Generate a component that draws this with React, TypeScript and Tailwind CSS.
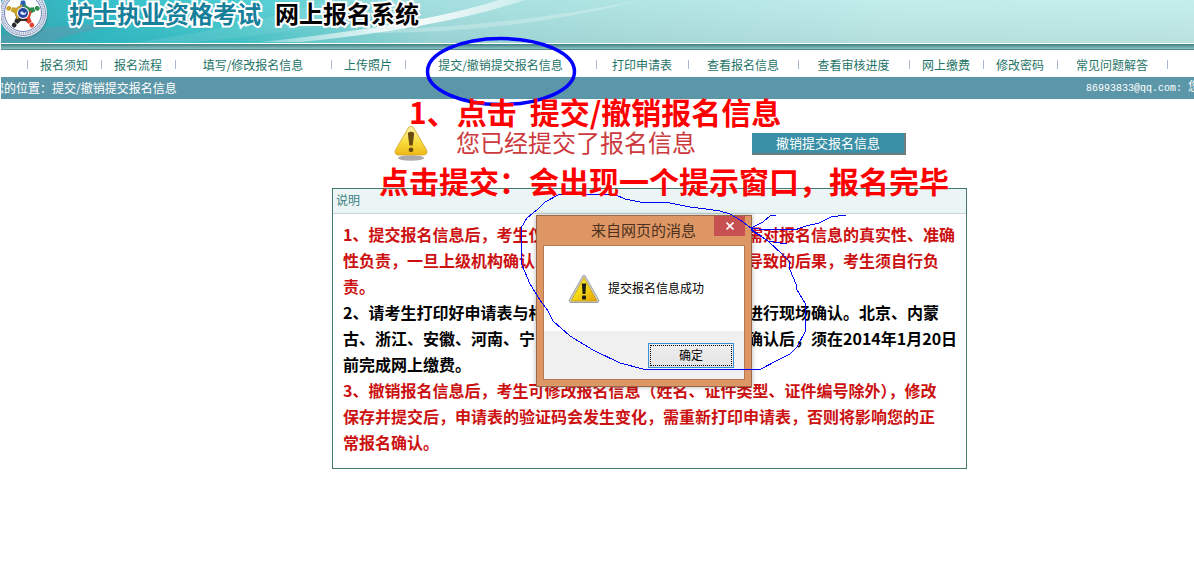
import clsx from "clsx";

const navItems = [
  { label: "报名须知", width: "w-[74px]" },
  { label: "报名流程", width: "w-[74px]" },
  { label: "填写/修改报名信息", width: "w-[156px]" },
  { label: "上传照片", width: "w-[74px]" },
  { label: "提交/撤销提交报名信息", width: "w-[191px]" },
  { label: "打印申请表", width: "w-[92px]" },
  { label: "查看报名信息", width: "w-[110px]" },
  { label: "查看审核进度", width: "w-[111px]" },
  { label: "网上缴费", width: "w-[74px]" },
  { label: "修改密码", width: "w-[74px]" },
  { label: "常见问题解答", width: "w-[110px]" },
];

type Notice = { tone: string; lines: string[][] };

// a line with two parts runs on either side of the message window
const notices: Notice[] = [
  {
    tone: "text-[#cc1111]",
    lines: [
      ["1、提交报名信息后，考生仅", "需对报名信息的真实性、准确"],
      ["性负责，一旦上级机构确认", "导致的后果，考生须自行负"],
      ["责。"],
    ],
  },
  {
    tone: "text-black",
    lines: [
      ["2、请考生打印好申请表与相", "进行现场确认。北京、内蒙"],
      ["古、浙江、安徽、河南、宁", "确认后，须在2014年1月20日"],
      ["前完成网上缴费。"],
    ],
  },
  {
    tone: "text-[#cc1111]",
    lines: [
      ["3、撤销报名信息后，考生可修改报名信息（姓名、证件类型、证件编号除外），修改"],
      ["保存并提交后，申请表的验证码会发生变化，需重新打印申请表，否则将影响您的正"],
      ["常报名确认。"],
    ],
  },
];

const figures = [
  { angle: 0, color: "#2a5fb4" },
  { angle: 72, color: "#2f8f4e" },
  { angle: 144, color: "#e0432e" },
  { angle: 216, color: "#2b2b2b" },
  { angle: 288, color: "#c9a227" },
];

function Logo() {
  return (
    <svg viewBox="0 0 48 40" className="h-10 w-12 shrink-0" aria-hidden="true">
      <circle cx="23" cy="15" r="24" fill="#3f7f92" opacity="0.5" />
      <circle cx="22" cy="13" r="24" fill="#eef1f6" />
      <circle cx="22" cy="13" r="22.5" fill="none" stroke="#6d7fae" strokeWidth="0.8" />
      <circle cx="22" cy="13" r="20.500" fill="none" stroke="#9aa6c8" strokeWidth="2" strokeDasharray="1.2 1" />
      <circle cx="22" cy="13" r="18.500" fill="#fff" stroke="#4c64a4" strokeWidth="0.8" />
      {figures.map(({ angle, color }) => (
        <g key={angle} transform={`rotate(${angle} 22 13)`} fill={color}>
          <circle cx="22" cy="-2" r="2.400" />
          <path d="M20 .8h4l1 4.700 5 3.500-1.200 1.600L24 8h-4l-4.800 2.600L14 9l5-3.500z" />
        </g>
      ))}
      <circle cx="22" cy="13" r="6" fill="#fff" />
      <circle cx="22" cy="13" r="5" fill="#24469c" />
      <path d="M19 13q1.500-3 3-1t3.500-.5q-.5 3.500-3 3.500t-3.500-2z" fill="#dbe6f6" />
    </svg>
  );
}

function BannerArt() {
  return (
    <svg
      viewBox="0 0 1193 43"
      preserveAspectRatio="none"
      className="absolute inset-0 h-full w-full"
      aria-hidden="true"
    >
      <defs>
        <linearGradient id="sky" x1="0" x2="1" y1="0" y2="0">
          <stop offset="0" stopColor="#139aa6" />
          <stop offset="0.08" stopColor="#10b2c0" />
          <stop offset="0.2" stopColor="#2ac2c8" />
          <stop offset="0.28" stopColor="#66cfd2" />
          <stop offset="0.36" stopColor="#9bdadb" />
          <stop offset="0.5" stopColor="#a9e0df" />
          <stop offset="0.75" stopColor="#c0ebe9" />
          <stop offset="1" stopColor="#c4edeb" />
        </linearGradient>
        <linearGradient id="shade" x1="0" x2="0" y1="0" y2="1">
          <stop offset="0" stopColor="#c8f4f2" stopOpacity="0.2" />
          <stop offset="1" stopColor="#90b8b8" stopOpacity="0.25" />
        </linearGradient>
        <linearGradient id="streak" x1="0" x2="1" y1="0" y2="0">
          <stop offset="0" stopColor="#fff" stopOpacity="0.3" />
          <stop offset="0.6" stopColor="#fff" stopOpacity="0.9" />
          <stop offset="1" stopColor="#fff" stopOpacity="0.4" />
        </linearGradient>
      </defs>
      <rect width="1193" height="43" fill="url(#sky)" />
      <path d="M0 43V36Q60 22 130 24Q70 32 48 43z" fill="#4a8fa8" opacity="0.6" />
      <path d="M130 43Q240 28 330 0H420Q340 30 180 43z" fill="#fff" opacity="0.1" />
      <rect width="1193" height="43" fill="url(#shade)" />
      <path d="M260 42Q420 25 498 0H524Q440 28 300 42z" fill="url(#streak)" />
      <path d="M360 30Q500 28 640 0Q520 32 380 33z" fill="#fff" opacity="0.25" />
    </svg>
  );
}

function GlossyWarning() {
  return (
    <svg viewBox="0 0 34 36" className="h-9 w-[34px] shrink-0" aria-hidden="true">
      <defs>
        <linearGradient id="gold" x1="0" x2="0" y1="0" y2="1">
          <stop offset="0" stopColor="#fbf3b0" />
          <stop offset="0.55" stopColor="#f8dc3c" />
          <stop offset="1" stopColor="#f0b818" />
        </linearGradient>
      </defs>
      <ellipse cx="17" cy="32" rx="13" ry="2.800" fill="#8f8f8f" opacity="0.75" />
      <path
        d="M14.500 1.500Q17-1 19.500 1.500L32.500 24Q34 28.500 30 29H4Q0 28.500 1.500 24z"
        fill="url(#gold)"
        stroke="#d3a32a"
        strokeWidth="0.8"
      />
      <path d="M13.800 7Q17 4.500 20.200 7L18.700 19.500h-3.400z" fill="#6b4a12" />
      <circle cx="17" cy="23.800" r="2.400" fill="#6b4a12" />
    </svg>
  );
}

function SystemWarning() {
  return (
    <svg viewBox="0 0 32 30" className="h-[30px] w-8 shrink-0" aria-hidden="true">
      <defs>
        <linearGradient id="amber" x1="0" x2="1" y1="0" y2="1">
          <stop offset="0" stopColor="#fdf04a" />
          <stop offset="0.5" stopColor="#f5d715" />
          <stop offset="1" stopColor="#e79f00" />
        </linearGradient>
      </defs>
      <path d="M15 1.500h2L31 26.500 30 28.500H2L1 26.500z" fill="#d2d2d2" stroke="#a0a0a0" />
      <path d="M16 3.500L29 27H3z" fill="url(#amber)" stroke="#c59b12" strokeWidth="0.8" />
      <path d="M13.800 9.500h4.400l-.8 10.500h-2.800z" fill="#1f1f10" />
      <rect x="14" y="21.500" width="4" height="4" rx="1" fill="#1f1f10" />
    </svg>
  );
}

function MessageWindow() {
  return (
    <div
      role="dialog"
      aria-label="来自网页的消息"
      className="absolute top-[26px] left-[203px] flex h-[172px] w-[216px] flex-col border border-[#97694a] bg-[#de9764] px-1.5 pb-1.5 text-black shadow-[0_0_5px_rgba(0,0,0,0.3)]"
    >
      <div className="flex h-[29px] shrink-0 items-start justify-end">
        <h2 className="mr-[18px] text-[15px] leading-[27px] text-[#4b3021]">来自网页的消息</h2>
        <button
          type="button"
          aria-label="关闭"
          className="flex h-5 w-[31px] items-center justify-center bg-[#c75050] text-white"
        >
          <svg viewBox="0 0 8 8" className="h-2 w-2" stroke="currentColor" strokeWidth="1.6">
            <path d="M.5.5l7 7M7.500.5l-7 7" />
          </svg>
        </button>
      </div>
      <div className="flex flex-1 flex-col border border-[#b67a52] bg-white">
        <div className="flex flex-1 items-center gap-2 pl-6">
          <SystemWarning />
          <p className="pb-0.5 text-xs">提交报名信息成功</p>
        </div>
        <div className="flex h-12 items-center justify-end bg-[#f0f0f0] pr-2.5">
          <button
            type="button"
            className="h-[25px] w-[86px] border border-[#3c8fd0] bg-linear-to-b from-[#f0f0f0] to-[#e2e2e2] p-px text-xs"
          >
            <span className="flex h-full items-center justify-center border border-dotted border-black">确定</span>
          </button>
        </div>
      </div>
    </div>
  );
}

function PenMarks() {
  return (
    <svg
      className="pointer-events-none absolute top-0 left-0 h-[400px] w-[1000px]"
      viewBox="0 0 1000 400"
      fill="none"
      stroke="#0000ff"
      aria-hidden="true"
    >
      <ellipse cx="501" cy="71.500" rx="73.500" ry="33" strokeWidth="3.5" />
      <g strokeWidth="1" shapeRendering="crispEdges">
        <path d="M751 228L740 220 730 214 720 211 706 209 690 207 670 203 640 202 625 199 616 195 590 194 558 195 545 202 538 209 527 218 521 228 521 247 522 265 530 284 540 300 548 311 553 321 570 336 593 350 620 363 645 369.500H760L778 360 790 354 797 347 805 332V303L797 290 796 284 790 270 789 261 783 255 768 241 751 229" />
        <path d="M751 228L763 222 770 216 776 215M751 228L763 229.500H796L806 226 819 223 831 217 846 215M751 230L768 241 780 243 787 244" />
      </g>
    </svg>
  );
}

export default function App() {
  return (
    <div className="relative min-h-screen overflow-hidden bg-white pl-px font-['Noto_Sans_CJK_SC',sans-serif] text-xs">
      <header>
        <div className="relative h-[43px] overflow-hidden">
          <BannerArt />
          <div className="relative flex items-start">
            <Logo />
            <h1 className="ml-5 flex gap-[14px] text-2xl leading-[26px] font-bold whitespace-nowrap [paint-order:stroke_fill] [-webkit-text-stroke:4px_white]">
              <span className="text-[#16809a]">护士执业资格考试</span>
              <span className="text-black">网上报名系统</span>
            </h1>
          </div>
        </div>
        <div className="h-[7px] border-t border-b border-t-white border-b-[#4c8a8c] bg-linear-to-b from-[#3f7f84] to-[#8cc4c4]" />
        <nav className="flex h-[27px] pl-[26px]">
          {navItems.map(({ label, width }) => (
            <a
              key={label}
              href="#"
              className={clsx(
                "flex h-full shrink-0 items-center justify-center pt-[3px] whitespace-nowrap text-[#1f7468]",
                "bg-[linear-gradient(#a9b9cf,#a9b9cf)] bg-[length:1px_9px] bg-[position:left_10px] bg-no-repeat",
                width,
              )}
            >
              {label}
            </a>
          ))}
          <span className="mt-2.5 h-[9px] w-px shrink-0 bg-[#a9b9cf]" />
        </nav>
        <div className="flex h-[22px] items-center justify-between overflow-hidden bg-[#5c97a9] whitespace-nowrap text-white">
          <span className="-ml-[9px]">您的位置：提交/撤销提交报名信息</span>
          <span className="-mr-1.5 font-['Liberation_Mono','Noto_Sans_CJK_SC',monospace] text-[10px]">
            86993833@qq.com: <span className="text-xs">您</span>
          </span>
        </div>
      </header>

      <main>
        <section className="flex h-[89px] items-center pl-[393px]">
          <GlossyWarning />
          <p className="ml-7 shrink-0 pb-1 text-2xl leading-6 text-[#cc3a3e]">您已经提交了报名信息</p>
          <button
            type="button"
            className="ml-14 h-[22px] w-[154px] shrink-0 border-r-2 border-b-2 border-[#6f7c80] bg-[#3a90a6] text-[13px] leading-[18px] text-white"
          >
            撤销提交报名信息
          </button>
        </section>

        <section className="relative ml-[331px] max-w-[635px] border border-[#44796f]">
          <h2 className="h-[25px] border-b border-[#c6d6dd] bg-[#ebf5f5] pl-[3px] leading-[21px] text-[#3b7f85]">说明</h2>
          <div className="px-2.5 pt-[7px] pb-[13px] text-base leading-[26px] font-bold">
            {notices.map(({ tone, lines }) => (
              <div key={lines[0][0]} className={tone}>
                {lines.map(([start, rest]) => (
                  <p key={start} className="flex whitespace-nowrap">
                    <span className={clsx(rest && "w-[404px] shrink-0")}>{start}</span>
                    {rest && <span>{rest}</span>}
                  </p>
                ))}
              </div>
            ))}
          </div>
          <MessageWindow />
        </section>
      </main>

      <PenMarks />
      <p className="absolute top-[96px] left-[409px] flex gap-[13px] text-[30px] leading-[30px] font-bold whitespace-nowrap text-[#ff0000]">
        <span>1、点击</span>
        <span>提交/撤销报名信息</span>
      </p>
      <p className="absolute top-[165px] left-[379px] text-[30px] leading-[30px] font-bold whitespace-nowrap text-[#ff0000]">
        点击提交：会出现一个提示窗口，报名完毕
      </p>
    </div>
  );
}
